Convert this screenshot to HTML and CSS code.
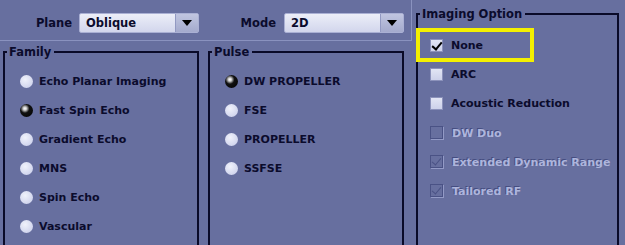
FILE: index.html
```html
<!DOCTYPE html>
<html lang="en">
<head>
    <meta charset="UTF-8">
    <title>Scan Setup</title>
    <link rel="stylesheet" href="styles.css">
</head>
<body>
    <div class="screen">
        <div class="left">
            <div class="topbar">
                <label class="field-label plane-label">Plane</label>
                <div class="select">
                    <span class="select-value">Oblique</span>
                    <span class="select-btn"><span class="arrow"></span></span>
                </div>
                <label class="field-label mode-label">Mode</label>
                <div class="select">
                    <span class="select-value">2D</span>
                    <span class="select-btn"><span class="arrow"></span></span>
                </div>
            </div>

            <div class="panels">
                <fieldset class="group">
                    <legend>Family</legend>
                    <ul class="options">
                        <li><span class="radio"></span>Echo Planar Imaging</li>
                        <li><span class="radio checked"></span>Fast Spin Echo</li>
                        <li><span class="radio"></span>Gradient Echo</li>
                        <li><span class="radio"></span>MNS</li>
                        <li><span class="radio"></span>Spin Echo</li>
                        <li><span class="radio"></span>Vascular</li>
                    </ul>
                </fieldset>
                <fieldset class="group">
                    <legend>Pulse</legend>
                    <ul class="options">
                        <li><span class="radio checked"></span>DW PROPELLER</li>
                        <li><span class="radio"></span>FSE</li>
                        <li><span class="radio"></span>PROPELLER</li>
                        <li><span class="radio"></span>SSFSE</li>
                    </ul>
                </fieldset>
            </div>
        </div>

        <fieldset class="group imaging">
            <legend>Imaging Option</legend>
            <ul class="options checks">
                <li class="focused"><span class="check on"></span>None</li>
                <li><span class="check"></span>ARC</li>
                <li><span class="check"></span>Acoustic Reduction</li>
                <li class="disabled"><span class="check"></span><span class="dim">DW Duo</span></li>
                <li class="disabled"><span class="check on"></span><span class="dim">Extended Dynamic Range</span></li>
                <li class="disabled"><span class="check on"></span><span class="dim">Tailored RF</span></li>
            </ul>
        </fieldset>
    </div>
</body>
</html>
```

FILE: styles.css
```css
body {
    margin: 0;
    background: #676f9f;
    font-family: "DejaVu Sans", Verdana, sans-serif;
    font-size: 11px;
    font-weight: bold;
    color: #0b0b2c;
    overflow: hidden;
}
.screen {
    display: flex;
    width: 625px;
    height: 245px;
    overflow: hidden;
}
.left {
    width: 412px;
}
.topbar {
    display: flex;
    align-items: center;
    height: 41px;
    box-sizing: border-box;
    padding-top: 6px;
    border-right: 1px solid #8a92bf;
    border-bottom: 1px solid #8a92bf;
}
.field-label {
    text-align: right;
    margin-right: 7px;
    font-size: 11.5px;
}
.plane-label {
    width: 72px;
}
.mode-label {
    width: 77px;
    margin-right: 8px;
}
.select {
    display: flex;
    width: 120px;
    height: 20px;
    box-sizing: border-box;
    background: linear-gradient(#eceef8, #d2d6ec);
    border: 1px solid #aab0d4;
    border-radius: 2px;
}
.select-value {
    flex: 1;
    padding-left: 6px;
    line-height: 18px;
    font-size: 11.5px;
}
.select-btn {
    display: flex;
    align-items: center;
    justify-content: center;
    width: 22px;
    background: linear-gradient(#c0c5e0, #a4aacd);
    border-left: 1px solid #9299c2;
}
.arrow {
    width: 0;
    height: 0;
    border-left: 5px solid transparent;
    border-right: 5px solid transparent;
    border-top: 6px solid #000;
}
.panels {
    display: grid;
    grid-template-columns: 196px 196px;
    column-gap: 9px;
    padding-left: 3px;
    margin-top: 4px;
}
.group {
    margin: 0;
    padding: 0;
    height: 260px;
    border: 2px solid #0a0a28;
    min-width: 0;
}
.group legend {
    margin-left: 2px;
    padding: 0 3px 0 2px;
    line-height: 14px;
    font-size: 11.5px;
}
.options {
    list-style: none;
    margin: 0;
    padding: 8px 0 0 15px;
}
.options li {
    display: flex;
    align-items: center;
    height: 29px;
}
.radio {
    width: 13px;
    height: 13px;
    border-radius: 50%;
    margin-right: 6px;
    background: radial-gradient(circle at 40% 35%, #f0f2fb, #d2d6ee 70%, #b8bddd);
}
.radio.checked {
    background: radial-gradient(circle at 38% 35%, #ffffff 0, #cfcfcf 14%, #111 38%, #000 100%);
}
.imaging {
    width: 203px;
    height: 250px;
    box-sizing: border-box;
    margin: 7px 0 0 4px;
    position: relative;
}
.checks {
    padding: 10px 0 0 12px;
}
.check {
    position: relative;
    width: 13px;
    height: 13px;
    box-sizing: border-box;
    margin-right: 8px;
    background: linear-gradient(#e2e5f4, #cdd1ea);
    border: 1px solid #8c92bb;
}
.check.on::after {
    content: "";
    position: absolute;
    left: 3px;
    top: 0;
    width: 4px;
    height: 8px;
    border-right: 2px solid #000;
    border-bottom: 2px solid #000;
    transform: rotate(40deg);
}
.dim {
    margin: 1px 0 0 1px;
    color: #aeb5dc;
    text-shadow: -1px -1px 0 #454d80;
}
.disabled .check {
    background: none;
    border: 1px solid #4a5285;
    box-shadow: 1px 1px 0 #939ac6;
}
.disabled .check.on::after {
    border-width: 0 1.5px 1.5px 0;
    border-color: #4a5285;
}
.focused {
    position: relative;
}
.focused::before {
    content: "";
    position: absolute;
    left: -14px;
    top: -3px;
    width: 118px;
    height: 34px;
    box-sizing: border-box;
    border: 4px solid #f4f000;
}
```
